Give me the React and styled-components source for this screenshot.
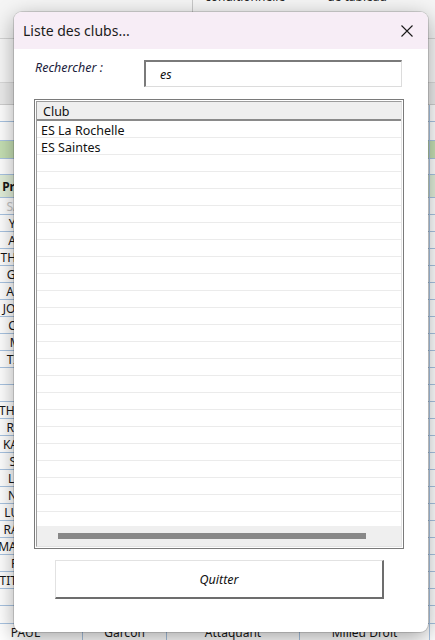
import styled, { createGlobalStyle } from "styled-components";

const GlobalStyle = createGlobalStyle`
  html, body {
    margin: 0;
    padding: 0;
    background: #fff;
  }
  body {
    font-family: "Noto Sans", "Open Sans", sans-serif;
  }
`;

// spreadsheet behind the dialog: only the left column and the last row show
const sheetRows = [
  { h: 17, cells: [""] },
  { h: 19, cells: [""] },
  { h: 18, bg: "#c6e0b4", cells: [""] },
  { h: 16, cells: [""] },
  { h: 23, bg: "#e2efda", bold: true, cells: ["Prénom"] },
  { h: 17, muted: true, cells: ["SACHA"] },
  { h: 17, cells: ["YANIS"] },
  { h: 17, cells: ["ADAM"] },
  { h: 17, cells: ["THOMAS"] },
  { h: 17, cells: ["GABIN"] },
  { h: 17, cells: ["ALEXIS"] },
  { h: 17, cells: ["JORDAN"] },
  { h: 17, cells: ["COME"] },
  { h: 17, cells: ["MAEL"] },
  { h: 17, cells: ["TIMEO"] },
  { h: 17, cells: [""] },
  { h: 17, cells: [""] },
  { h: 17, cells: ["THEOTIM"] },
  { h: 17, cells: ["ROBIN"] },
  { h: 17, cells: ["KARIMA"] },
  { h: 17, cells: ["SAMY"] },
  { h: 17, cells: ["LOUIS"] },
  { h: 17, cells: ["NOAH"] },
  { h: 17, cells: ["LUCIEN"] },
  { h: 17, cells: ["RAYANE"] },
  { h: 17, cells: ["MAY-LINE"] },
  { h: 17, cells: ["REMI"] },
  { h: 17, cells: ["TITOUAN"] },
  { h: 17, cells: [""] },
  { h: 18, cells: [""] },
  { h: 17, cells: ["PAUL", "Garcon", "Attaquant", "Milieu Droit"] },
];

const clubs = ["ES La Rochelle", "ES Saintes"];

export default function App() {
  return (
    <>
      <GlobalStyle />
      <Page>
        <Ribbon>
          <RibbonSep />
          <RibbonLabel $gap={12}>conditionnelle</RibbonLabel>
          <RibbonLabel $gap={42}>de tableau</RibbonLabel>
        </Ribbon>
        <FormulaBar />
        <ColHeader />
        <SheetGrid>
          {sheetRows.map((row, i) =>
            [0, 1, 2, 3, 4].map((j) => (
              <Cell
                key={i + "-" + j}
                $h={row.h}
                $bg={row.bg}
                $bold={row.bold}
                $muted={row.muted}
              >
                {row.cells[j] || ""}
              </Cell>
            ))
          )}
        </SheetGrid>

        <Dialog>
          <TitleBar>
            <Title>Liste des clubs...</Title>
            <svg width="12" height="12" viewBox="0 0 12 12">
              <path d="M0.5 0.5 L11.5 11.5 M11.5 0.5 L0.5 11.5" stroke="#1a1a1a" strokeWidth="1.1" fill="none" />
            </svg>
          </TitleBar>
          <Body>
            <SearchRow>
              <SearchLabel>Rechercher :</SearchLabel>
              <SearchInput readOnly value="es" />
            </SearchRow>
            <ListBox>
              <ListInner>
                <ListHeader>Club</ListHeader>
                <Rows>
                  {Array.from({ length: 25 }).map((_, i) => (
                    <ListRow key={i}>{clubs[i] || ""}</ListRow>
                  ))}
                </Rows>
                <ScrollBar>
                  <Thumb />
                </ScrollBar>
              </ListInner>
            </ListBox>
            <QuitButton>Quitter</QuitButton>
          </Body>
        </Dialog>
      </Page>
    </>
  );
}

const Page = styled.div`
  position: relative;
  width: 435px;
  height: 640px;
  overflow: hidden;
  background: #fff;
`;

const Ribbon = styled.div`
  height: 39px;
  box-sizing: border-box;
  background: #f5f5f5;
  border-bottom: 1px solid #d4d4d4;
  display: flex;
  align-items: flex-start;
  padding-left: 192px;
`;

const RibbonSep = styled.div`
  width: 1px;
  height: 12px;
  background: #c8c8c8;
`;

const RibbonLabel = styled.span`
  font-size: 12px;
  line-height: 14px;
  color: #262626;
  margin-top: -10px;
  margin-left: ${(p) => p.$gap}px;
  white-space: nowrap;
`;

const FormulaBar = styled.div`
  height: 44px;
  box-sizing: border-box;
  background: #f8f8f8;
  border-bottom: 1px solid #dadada;
`;

const ColHeader = styled.div`
  height: 22px;
  box-sizing: border-box;
  background: #ececec;
  border-bottom: 1px solid #cfcfcf;
`;

const SheetGrid = styled.div`
  display: grid;
  grid-template-columns: 114px 84px 133px 130px 60px;
  margin-left: -31px;
`;

const Cell = styled.div`
  height: ${(p) => p.$h}px;
  box-sizing: border-box;
  background: ${(p) => p.$bg || "#fff"};
  border-right: 1px solid #a9c4e2;
  border-bottom: 1px solid #a9c4e2;
  display: flex;
  align-items: center;
  justify-content: center;
  font-family: "Noto Sans", sans-serif;
  font-size: 12px;
  font-weight: ${(p) => (p.$bold ? 700 : 400)};
  color: ${(p) => (p.$muted ? "#c4c4c4" : "#161616")};
  white-space: nowrap;
  overflow: hidden;
`;

const Dialog = styled.div`
  position: absolute;
  left: 14px;
  top: 12px;
  width: 414px;
  height: 620px;
  background: #fff;
  border-radius: 8px;
  box-shadow: 0 0 0 1px rgba(0, 0, 0, 0.14), 0 6px 22px rgba(0, 0, 0, 0.36);
  display: flex;
  flex-direction: column;
  overflow: hidden;
`;

const TitleBar = styled.div`
  height: 37px;
  box-sizing: border-box;
  background: #f7edf6;
  display: flex;
  align-items: center;
  justify-content: space-between;
  padding: 0 15px 0 9px;
`;

const Title = styled.span`
  font-family: "Noto Sans", sans-serif;
  font-size: 14px;
  color: #1b1b1b;
`;

const Body = styled.div`
  flex: 1;
  display: flex;
  flex-direction: column;
  padding: 11px 0 0 20px;
`;

const SearchRow = styled.div`
  display: flex;
  align-items: flex-start;
  padding-left: 1px;
`;

const SearchLabel = styled.div`
  width: 109px;
  font-size: 12.5px;
  font-style: italic;
  line-height: 15px;
  color: #1c1c3c;
`;

const SearchInput = styled.input`
  width: 258px;
  height: 27px;
  box-sizing: border-box;
  margin: 0;
  border-top: 2px solid #7a7a7a;
  border-left: 2px solid #7a7a7a;
  border-right: 1px solid #dcdcdc;
  border-bottom: 1px solid #dcdcdc;
  padding: 0 0 0 14px;
  font-family: "Noto Sans", sans-serif;
  font-size: 12.5px;
  font-style: italic;
  color: #111;
  background: #fff;
  outline: none;
`;

const ListBox = styled.div`
  margin-top: 12px;
  width: 370px;
  height: 450px;
  box-sizing: border-box;
  border: 1px solid #7a7a7a;
  padding: 1px;
  display: flex;
  background: #fff;
`;

const ListInner = styled.div`
  flex: 1;
  display: flex;
  flex-direction: column;
  border-top: 1px solid #9c9c9c;
  border-left: 1px solid #9c9c9c;
  border-right: 1px solid #e3e3e3;
  border-bottom: 1px solid #e3e3e3;
  overflow: hidden;
`;

const ListHeader = styled.div`
  height: 19px;
  box-sizing: border-box;
  flex-shrink: 0;
  background: #efefef;
  border-bottom: 2px solid #8a8a8a;
  padding: 2px 0 0 6px;
  display: flex;
  align-items: center;
  font-size: 12.5px;
  color: #111;
`;

const Rows = styled.div`
  flex: 1;
  overflow: hidden;
`;

const ListRow = styled.div`
  height: 17px;
  box-sizing: border-box;
  border-bottom: 1px solid #ebebeb;
  padding: 2px 0 0 4px;
  font-size: 12.5px;
  line-height: 15px;
  color: #111;
  white-space: nowrap;
`;

const ScrollBar = styled.div`
  height: 20px;
  flex-shrink: 0;
  background: #efefef;
  display: flex;
  align-items: center;
  padding-left: 21px;
`;

const Thumb = styled.div`
  width: 308px;
  height: 6px;
  background: #888;
`;

const QuitButton = styled.button`
  margin: 11px 0 0 21px;
  width: 329px;
  height: 39px;
  box-sizing: border-box;
  padding: 0;
  background: #fff;
  border-top: 1px solid #e2e2e2;
  border-left: 1px solid #e2e2e2;
  border-right: 2px solid #6d6d6d;
  border-bottom: 2px solid #6d6d6d;
  font-family: "Noto Sans", sans-serif;
  font-size: 12.5px;
  font-style: italic;
  color: #111;
`;
